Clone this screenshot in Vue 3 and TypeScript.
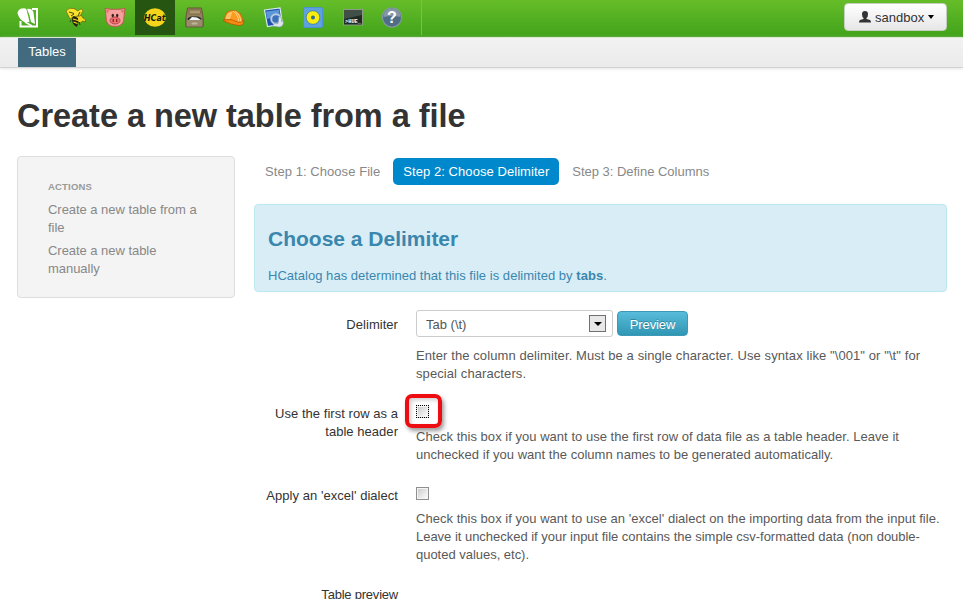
<script setup lang="ts">
import { ref } from 'vue'

interface Step {
  label: string
  active: boolean
}

const steps: Step[] = [
  { label: 'Step 1: Choose File', active: false },
  { label: 'Step 2: Choose Delimiter', active: true },
  { label: 'Step 3: Define Columns', active: false },
]
const actions: string[] = ['Create a new table from a file', 'Create a new table manually']
const useHeader = ref(false)
const useExcel = ref(false)
</script>

<template>
  <div class="page">
    <header class="navbar">
      <nav class="apps">
        <a class="app home">
          <svg width="22" height="22" viewBox="0 0 22 22">
            <path d="M15 2h5v17.500H3.500V14" fill="none" stroke="#fff" stroke-width="2" />
            <path d="M.5 6q1-4 4-4.500 4-1 5 1l1.500 6 1.500 6.500-4 .5Q2 13 .5 6z" fill="#fff" />
            <path d="M10 2q5-1 6.500 3.500L18 17l-4-2q-1-7-4-13z" fill="#fff" />
            <path d="M8 15l7 4" stroke="#fff" stroke-width="1.500" />
          </svg>
        </a>
        <a class="app">
          <svg width="22" height="22" viewBox="0 0 22 22">
            <path d="M11 9q6-2 7 2 4 1 2.500 4l-3-1-2 2-4-2z" fill="#f7d71d" stroke="#5b5710" stroke-width=".7" />
            <path d="M1 4q3-4 8-2.500l4 2.500q4-4 5 0l-3 5-6 .5L5 12 3 8z" fill="#f9e22a" stroke="#6d6412" stroke-width=".7" />
            <path d="M8 9l5 2q1 5-1 9-5-2-5-8z" fill="#242613" />
            <path d="M8 12l5 1.500M8.500 15l4 1.500" stroke="#f4d922" stroke-width="1.300" />
            <path d="M4 5l5 1.500M6 9l3-2M15 5l-2 4M6 13l-1 2M14 15l1 3" stroke="#343413" stroke-width=".9" />
          </svg>
        </a>
        <a class="app">
          <svg width="22" height="22" viewBox="0 0 22 22">
            <path d="M1 1.500l6 .8h8l6-.8-1 8q.5 10-9 10T2 9.500z" fill="#f5a09c" stroke="#be5750" stroke-width="1" />
            <path d="M2 3l3.500.5-2.500 3M20 3l-3.500.5 2.500 3" fill="#df706c" />
            <ellipse cx="8.800" cy="8.500" rx="1.200" ry="1.700" fill="#36201f" />
            <ellipse cx="13.200" cy="8.500" rx="1.200" ry="1.700" fill="#36201f" />
            <ellipse cx="11" cy="13.500" rx="5" ry="3.500" fill="#f36f70" stroke="#b54748" />
            <path d="M9.300 12v3M12.700 12v3" stroke="#8b292f" stroke-width="1.400" />
          </svg>
        </a>
        <a class="app selected">
          <svg class="hcat-logo" width="28" height="22" viewBox="0 0 28 22">
            <ellipse cx="14" cy="10.500" rx="10.800" ry="9.300" fill="#f4d51c" />
            <text x="3" y="13.800" textLength="21.500" lengthAdjust="spacingAndGlyphs" class="hcat">HCat</text>
          </svg>
        </a>
        <a class="app">
          <svg width="22" height="22" viewBox="0 0 22 22">
            <path d="M3.500 1h14l1.500 9v9.500H2V10z" fill="#93805d" stroke="#695738" />
            <rect x="5" y="3" width="11.500" height="4" rx="1" fill="#ab9870" stroke="#75623f" stroke-width=".8" />
            <path d="M2 12h17v8H2z" fill="#9b8a6b" stroke="#5b5038" stroke-width=".8" />
            <path d="M4 13v-2l3-1.500h7l3 1.500v2z" fill="#242a25" />
            <path d="M5 13l3-3 5 .5 4 2.500z" fill="#f3f6f8" />
            <rect x="7.500" y="15.500" width="6" height="2" rx="1" fill="#c1b59a" />
          </svg>
        </a>
        <a class="app">
          <svg width="22" height="22" viewBox="0 0 22 22">
            <path d="M1.500 13Q2 3.500 9.500 3.500 19 3.500 20 15l-4 1z" fill="#fb9b20" stroke="#c96009" stroke-width=".8" />
            <path d="M2.500 12q1-7 7-7.500L7 12z" fill="#ffc565" />
            <path d="M10 4q5 3 6 11M12 4q5 3 6 11" fill="none" stroke="#ffe09c" stroke-width=".8" />
            <path d="M.5 13q8-2 14 2 4 1 6.500-1.500 0 5-5 5Q9 18 .5 14z" fill="#f58a12" stroke="#a95105" stroke-width=".7" />
          </svg>
        </a>
        <a class="app">
          <svg width="22" height="22" viewBox="0 0 22 22">
            <path d="M1.500 3l15.500-2 2.500 16-15 2.500z" fill="#1d50a6" stroke="#dae9f5" stroke-width="1.200" />
            <path d="M3 4.500l13-1.700.8 5.200L4 12z" fill="#5b96d9" />
            <circle cx="13" cy="12" r="4.800" fill="#3c72bd" stroke="#b9cbe0" stroke-width="2" />
            <path d="M9 19q1-3 6-2.500l1-7 2.500 1v4l2-.5q0 6-4.500 6z" fill="#dce5ee" stroke="#8498aa" stroke-width=".6" />
          </svg>
        </a>
        <a class="app">
          <svg width="22" height="22" viewBox="0 0 22 22">
            <rect x="1.500" y=".5" width="19" height="20" rx="1.500" fill="#5da2df" stroke="#4d92d0" />
            <circle cx="11" cy="10.500" r="6.800" fill="#f9ee10" stroke="#3b7194" stroke-width=".7" />
            <circle cx="11" cy="10.500" r="2" fill="#396b8a" />
          </svg>
        </a>
        <a class="app">
          <svg width="22" height="22" viewBox="0 0 22 22">
            <rect x="1.500" y="2.500" width="19" height="15.500" fill="#1f2b24" stroke="#8d9c85" />
            <path d="M2 3h18v5L2 12z" fill="#414f46" />
            <text x="3" y="16.200" textLength="16" lengthAdjust="spacingAndGlyphs" class="hue">&gt;HUE_</text>
          </svg>
        </a>
        <a class="app">
          <svg width="22" height="22" viewBox="0 0 22 22">
            <circle cx="11" cy="10.500" r="9.600" fill="#4f6d86" stroke="#8597a6" stroke-width="1.200" />
            <path d="M2.500 10a8.500 8.500 0 0 1 17 0q-8-2-17 0z" fill="#8496a7" />
            <text x="11" y="16" text-anchor="middle" class="question">?</text>
          </svg>
        </a>
      </nav>
      <button class="user" type="button">
        <svg width="12" height="12" viewBox="0 0 12 12">
          <path d="M3 3Q3 0 6 0t3 3-1.500 4v1l3.500 1q1 .5 1 2.500H0Q0 9.500 1 9l3.500-1V7Q3 6 3 3z" fill="#333" />
        </svg>
        <span>sandbox</span>
        <i class="caret"></i>
      </button>
    </header>

    <div class="subnav"><a class="tab">Tables</a></div>

    <main class="content">
      <h1>Create a new table from a file</h1>
      <div class="columns">
        <aside class="sidebar">
          <h6>ACTIONS</h6>
          <a v-for="action in actions" :key="action">{{ action }}</a>
        </aside>

        <section class="main">
          <nav class="steps">
            <a v-for="step in steps" :key="step.label" :class="{ active: step.active }">{{ step.label }}</a>
          </nav>

          <div class="alert">
            <h3>Choose a Delimiter</h3>
            <p>HCatalog has determined that this file is delimited by <strong>tabs</strong>.</p>
          </div>

          <form class="form" @submit.prevent>
            <div class="row delimiter">
              <div class="label">Delimiter</div>
              <div class="field">
                <div class="inputs">
                  <div class="select"><span>Tab (\t)</span><b class="arrow"><i></i></b></div>
                  <button class="preview" type="button">Preview</button>
                </div>
                <p class="help wide">Enter the column delimiter. Must be a single character. Use syntax like "\001" or "\t" for<br>special characters.</p>
              </div>
            </div>
            <div class="row header-row">
              <label class="label" for="header">Use the first row as a<br>table header</label>
              <div class="field">
                <div class="check-wrap">
                  <input id="header" v-model="useHeader" class="check focused" type="checkbox">
                  <span class="highlight"></span>
                </div>
                <p class="help">Check this box if you want to use the first row of data file as a table header. Leave it<br>unchecked if you want the column names to be generated automatically.</p>
              </div>
            </div>
            <div class="row excel-row">
              <label class="label" for="excel">Apply an 'excel' dialect</label>
              <div class="field">
                <div class="check-wrap">
                  <input id="excel" v-model="useExcel" class="check" type="checkbox">
                </div>
                <p class="help">Check this box if you want to use an 'excel' dialect on the importing data from the input file.<br><span class="tight">Leave it unchecked if your input file contains the simple csv-formatted data (non double-<br>quoted values, etc).</span></p>
              </div>
            </div>
            <div class="row table-row"><div class="label">Table preview</div></div>
          </form>
        </section>
      </div>
    </main>
  </div>
</template>

<style>
body {
  margin: 0;
  background: #fff;
  overflow: hidden;
}
</style>

<style scoped>
* {
  box-sizing: border-box;
}
.page {
  height: 599px;
  overflow: hidden;
  font: 13px/18px "Liberation Sans", Arial, sans-serif;
  color: #333;
}
.navbar {
  display: flex;
  justify-content: space-between;
  height: 37px;
  padding-right: 16px;
  background: linear-gradient(#66bd29, #42a31c);
  border-bottom: 1px solid #3d9b18;
}
.apps {
  display: flex;
  width: 422px;
  height: 35px;
  padding-left: 8px;
  border-right: 1px solid #73c447;
}
.app {
  display: flex;
  align-items: center;
  justify-content: center;
  width: 39.5px;
  height: 35px;
  flex: none;
}
.app.home {
  width: 48px;
  padding-right: 8px;
}
.app.selected {
  width: 40px;
  background: #265512;
}
.hcat-logo {
  overflow: visible;
}
.hcat {
  font: italic bold 9px "DejaVu Sans", sans-serif;
  fill: #181a0e;
}
.hue {
  font: bold 6px "Liberation Mono", monospace;
  fill: #fff;
}
.question {
  font: bold 16px "Liberation Sans", sans-serif;
  fill: #fff;
}
.user {
  display: flex;
  align-items: center;
  gap: 4px;
  width: 103px;
  height: 28px;
  margin-top: 3px;
  padding: 0 0 0 14px;
  font: 13px/18px "Liberation Sans", Arial, sans-serif;
  color: #333;
  background: linear-gradient(#fff, #e6e6e6);
  border: 1px solid #c5cfc0;
  border-radius: 4px;
}
.user span {
  position: relative;
  top: 1px;
}
.caret {
  border-top: 4px solid #000;
  border-left: 3px solid transparent;
  border-right: 3px solid transparent;
}
.subnav {
  height: 31px;
  padding-left: 18px;
  background: linear-gradient(#f2f2f2, #ebebeb);
  border-top: 1px solid #d8ead0;
  border-bottom: 1px solid #d2d2d2;
  box-shadow: 0 1px 3px #e6e6e6;
}
.tab {
  display: block;
  width: 58px;
  height: 29px;
  line-height: 27px;
  text-align: center;
  color: #fff;
  background: #436b80;
}
.content {
  padding: 0 16px 0 17px;
}
h1 {
  margin: 28px 0 20px;
  font-size: 32.5px;
  line-height: 40px;
  letter-spacing: -0.04px;
}
.columns {
  display: flex;
  gap: 19px;
}
.sidebar {
  width: 218px;
  height: 142px;
  flex: none;
  padding: 21px 30px;
  background: #f4f4f4;
  border: 1px solid #dedede;
  border-radius: 4px;
}
.sidebar h6 {
  margin: 0 0 5px;
  font-size: 9.5px;
  line-height: 18px;
  letter-spacing: 0.2px;
  color: #999;
}
.sidebar a {
  display: block;
  margin-bottom: 5px;
  letter-spacing: -0.04px;
  color: #888;
}
.main {
  flex: 1;
}
.steps {
  display: flex;
  gap: 3px;
  padding: 2px 0 0 1px;
  margin-bottom: 19px;
  letter-spacing: 0.06px;
}
.steps a {
  height: 27px;
  padding: 0 10px;
  line-height: 27px;
  color: #888;
}
.steps a:last-child {
  letter-spacing: -0.02px;
}
.steps .active {
  color: #fff;
  background: #0088cc;
  border-radius: 5px;
}
.alert {
  height: 88px;
  padding: 20px 13px;
  color: #3a87ad;
  background: #d9edf7;
  border: 1px solid #bce8f1;
  border-radius: 4px;
}
.alert h3 {
  margin: 0;
  font-size: 21px;
  line-height: 27px;
}
.alert p {
  margin: 15px 0 0;
  letter-spacing: 0.035px;
}
.form {
  padding-top: 18px;
}
.row {
  display: flex;
  gap: 18px;
}
.delimiter {
  height: 85px;
}
.header-row {
  height: 82px;
}
.excel-row {
  height: 102px;
}
.label {
  width: 144px;
  flex: none;
  padding-top: 6px;
  text-align: right;
  letter-spacing: 0.04px;
}
.header-row .label,
.excel-row .label {
  padding-top: 10px;
}
.table-row .label {
  padding-top: 7px;
  letter-spacing: -0.22px;
}
.inputs {
  display: flex;
  align-items: center;
  gap: 4px;
}
.select {
  display: flex;
  align-items: center;
  justify-content: space-between;
  width: 197px;
  height: 27px;
  padding: 0 6px 0 9px;
  color: #555;
  border: 1px solid #ccc;
  border-radius: 3px;
}
.select span {
  padding-top: 2px;
}
.arrow {
  display: flex;
  align-items: center;
  justify-content: center;
  width: 17px;
  height: 17px;
  background: #e8e8e8;
  border: 1px solid #707070;
}
.arrow i {
  border-top: 4px solid #000;
  border-left: 4px solid transparent;
  border-right: 4px solid transparent;
}
.preview {
  width: 71px;
  height: 25px;
  padding: 2px 0 0;
  font: 13px/18px "Liberation Sans", Arial, sans-serif;
  letter-spacing: -0.1px;
  color: #fff;
  background: linear-gradient(#58bcda, #2f96b4);
  border: 1px solid #3d9ab6;
  border-radius: 4px;
  text-shadow: 0 -1px 0 rgba(0, 0, 0, 0.25);
}
.help {
  margin: 10px 0 0;
  letter-spacing: 0.028px;
  color: #595959;
  white-space: nowrap;
}
.help.wide {
  letter-spacing: 0.09px;
}
.tight {
  letter-spacing: -0.022px;
}
.check-wrap {
  position: relative;
  height: 23px;
  padding-top: 10px;
}
.check {
  display: block;
  appearance: none;
  width: 13px;
  height: 13px;
  margin: 0;
  background: linear-gradient(135deg, #c8c8c8, #fff);
  border: 1px solid #8e8f8f;
  box-shadow: inset 0 0 0 1px #f4f4f4;
}
.check.focused {
  border: 1px dotted #000;
}
.highlight {
  position: absolute;
  left: -11px;
  top: -1px;
  width: 37px;
  height: 34px;
  border: 4px solid #ed0c10;
  border-radius: 7px;
  box-shadow: 2px 3px 4px rgba(0, 0, 0, 0.4), inset 2px 2px 4px rgba(0, 0, 0, 0.2);
  pointer-events: none;
}
</style>
